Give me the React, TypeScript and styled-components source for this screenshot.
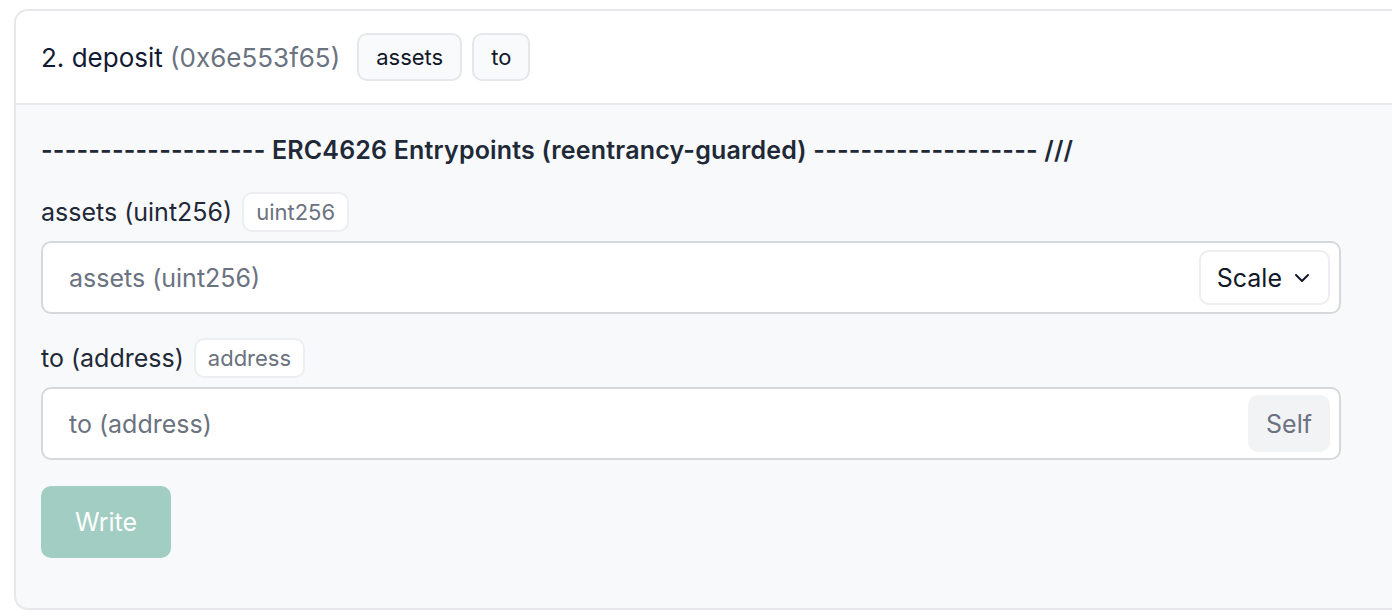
import styled, { createGlobalStyle } from 'styled-components';
import { ChevronDown } from 'lucide-react';

const GlobalStyle = createGlobalStyle`
  html, body {
    margin: 0;
    padding: 0;
    background: #ffffff;
    overflow: hidden;
  }
  body {
    font-family: Inter, "Noto Sans", "Liberation Sans", sans-serif;
    -webkit-font-smoothing: antialiased;
  }
  * {
    box-sizing: border-box;
  }
`;

const Page = styled.div`
  padding: 9px 0 0 14px;
  width: 1460px;
`;

const Card = styled.section`
  width: 1420px;
  border: 2px solid #e7e8ec;
  border-radius: 14px;
  overflow: hidden;
  background: #f8f9fb;
`;

const Header = styled.header`
  display: flex;
  align-items: center;
  gap: 10px;
  padding: 22px 25px;
  background: #ffffff;
  border-bottom: 2px solid #e7e8ec;
`;

const Title = styled.h2`
  margin: 0 7px 0 0;
  font-size: 26px;
  font-weight: 400;
  color: #111a33;
`;

const Selector = styled.span`
  color: #6b7280;
`;

const ArgTag = styled.span`
  display: inline-flex;
  align-items: center;
  height: 48px;
  padding: 0 17px;
  border: 2px solid #e5e7eb;
  border-radius: 10px;
  background: #f9fafb;
  font-size: 22px;
  color: #111827;
`;

const Body = styled.div`
  display: flex;
  flex-direction: column;
  padding: 30px 25px 50px;
  max-width: 1350px;
`;

const Notice = styled.p`
  margin: 0 0 27px;
  font-size: 25px;
  line-height: 30px;
  font-weight: 600;
  letter-spacing: 0.18px;
  color: #1f2937;
`;

const Field = styled.div`
  display: flex;
  flex-direction: column;
  gap: 9px;
  margin-bottom: 24px;
`;

const LabelRow = styled.label`
  display: flex;
  align-items: center;
  gap: 10px;
  height: 40px;
  font-size: 25px;
  color: #1f2937;
`;

const TypeBadge = styled.span`
  display: inline-flex;
  align-items: center;
  height: 40px;
  padding: 0 12px;
  border: 2px solid #eceef1;
  border-radius: 10px;
  background: #ffffff;
  font-size: 22px;
  color: #6b7280;
`;

const InputBox = styled.div`
  display: flex;
  align-items: center;
  height: 73px;
  padding: 0 9px 0 24px;
  border: 2px solid #d6d8dc;
  border-radius: 10px;
  background: #ffffff;
`;

const Input = styled.input`
  flex: 1;
  min-width: 0;
  border: none;
  outline: none;
  background: transparent;
  font-family: inherit;
  font-size: 25px;
  color: #111827;
  &::placeholder {
    color: #6b7280;
  }
`;

const SideButton = styled.button<{ $muted?: boolean }>`
  display: inline-flex;
  align-items: center;
  gap: 8px;
  height: ${(p) => (p.$muted ? '57px' : '55px')};
  padding: ${(p) => (p.$muted ? '0 18px' : '0 14px 0 16px')};
  border: ${(p) => (p.$muted ? 'none' : '2px solid #eceef1')};
  border-radius: 10px;
  background: ${(p) => (p.$muted ? '#f2f3f5' : '#ffffff')};
  font-family: inherit;
  font-size: 25px;
  color: ${(p) => (p.$muted ? '#6b7280' : '#111827')};
  cursor: pointer;
`;

const WriteButton = styled.button`
  align-self: flex-start;
  width: 130px;
  height: 72px;
  margin-top: 2px;
  border: none;
  border-radius: 10px;
  background: #a2cdc3;
  font-family: inherit;
  font-size: 25px;
  color: #ffffff;
`;

export default function App() {
  return (
    <>
      <GlobalStyle />
      <Page>
        <Card>
          <Header>
            <Title>
              2. deposit <Selector>(0x6e553f65)</Selector>
            </Title>
            <ArgTag>assets</ArgTag>
            <ArgTag>to</ArgTag>
          </Header>
          <Body>
            <Notice>
              ------------------- ERC4626 Entrypoints (reentrancy-guarded) ------------------- ///
            </Notice>
            <Field>
              <LabelRow>
                assets (uint256)
                <TypeBadge>uint256</TypeBadge>
              </LabelRow>
              <InputBox>
                <Input placeholder="assets (uint256)" />
                <SideButton>
                  Scale
                  <ChevronDown size={24} strokeWidth={2} />
                </SideButton>
              </InputBox>
            </Field>
            <Field>
              <LabelRow>
                to (address)
                <TypeBadge>address</TypeBadge>
              </LabelRow>
              <InputBox>
                <Input placeholder="to (address)" />
                <SideButton $muted>Self</SideButton>
              </InputBox>
            </Field>
            <WriteButton>Write</WriteButton>
          </Body>
        </Card>
      </Page>
    </>
  );
}
